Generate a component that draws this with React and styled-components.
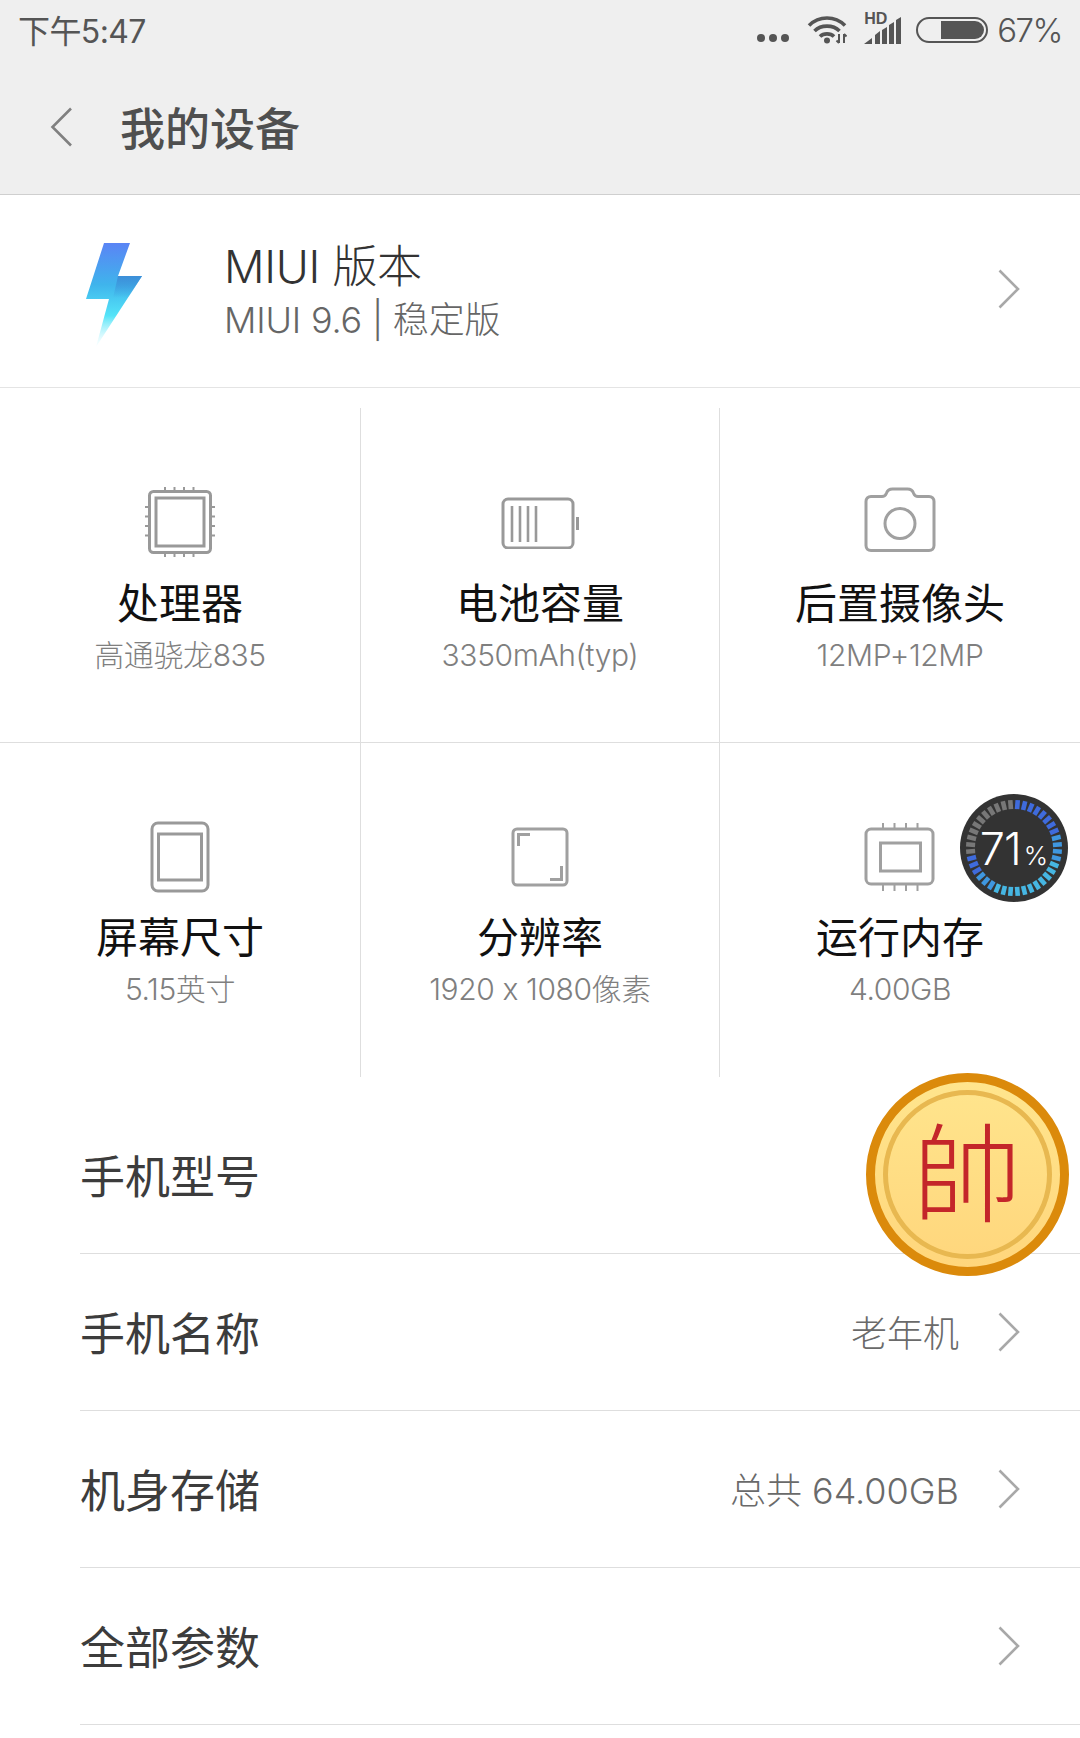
import React from 'react';
import styled, { createGlobalStyle } from 'styled-components';

const GlobalStyle = createGlobalStyle`
    html, body {
        margin: 0;
        padding: 0;
        background: #fff;
    }
    * {
        box-sizing: border-box;
    }
`

const FONT = `Inter, "Noto Sans CJK SC", sans-serif`;

const specs = [
    { key: 'cpu', title: '处理器', sub: '高通骁龙835' },
    { key: 'battery', title: '电池容量', sub: '3350mAh(typ)' },
    { key: 'camera', title: '后置摄像头', sub: '12MP+12MP' },
    { key: 'screen', title: '屏幕尺寸', sub: '5.15英寸' },
    { key: 'resolution', title: '分辨率', sub: '1920 x 1080像素' },
    { key: 'ram', title: '运行内存', sub: '4.00GB' },
];

const rows = [
    { title: '手机型号' },
    { title: '手机名称', value: '老年机', arrow: true },
    { title: '机身存储', value: '总共 64.00GB', arrow: true },
    { title: '全部参数', arrow: true },
];

const ticks = (x, y, len, step, n) =>
    Array.from({ length: n }, (_, i) => `M${x + i * step} ${y}v${len}`).join('');

const CpuIcon = () => (
    <svg width="72" height="72" viewBox="0 0 72 72" fill="none" stroke="#999">
        <rect x="5.500" y="5.500" width="61" height="61" rx="4" strokeWidth="3" />
        <rect x="12" y="12" width="48" height="48" strokeWidth="3" />
        <path strokeWidth="2" d={ticks(21, 1, 3, 9.500, 4)} />
        <path strokeWidth="2" d={ticks(21, 68, 3, 9.500, 4)} />
        <path strokeWidth="2" d="M1 21h3M1 30.500h3M1 40h3M1 49.500h3M68 21h3M68 30.500h3M68 40h3M68 49.500h3" />
    </svg>
);

const BatteryIcon = () => (
    <svg width="78" height="54" viewBox="0 -2 78 54" fill="none" stroke="#999">
        <rect x="2" y="2" width="70" height="49" rx="5" strokeWidth="3" />
        <path strokeWidth="2.600" d={ticks(11, 9, 36, 8, 4)} />
        <path strokeWidth="3" d="M76.500 20v13" />
    </svg>
);

const CameraIcon = () => (
    <svg width="72" height="70" viewBox="0 0 72 70" fill="none" stroke="#a0a0a0" strokeWidth="3">
        <path d="M7 9.500h11c3 0 3.500-1.200 4.500-3.500 1-2.600 3-4 6-4h15c3 0 5 1.400 6 4 1 2.300 1.500 3.500 4.500 3.500h11c3 0 5 2 5 5v44c0 3-2 5-5 5H7c-3 0-5-2-5-5v-44c0-3 2-5 5-5z" />
        <circle cx="36" cy="36.500" r="15" />
    </svg>
);

const ScreenIcon = () => (
    <svg width="60" height="72" viewBox="0 0 60 72" fill="none" stroke="#999">
        <rect x="2" y="2" width="56" height="68" rx="6" strokeWidth="3" />
        <rect x="8.500" y="13" width="43" height="46" strokeWidth="3" />
    </svg>
);

const ResolutionIcon = () => (
    <svg width="58" height="60" viewBox="0 0 58 60" fill="none" stroke="#a0a0a0">
        <rect x="2" y="2" width="54" height="56" rx="4" strokeWidth="3" />
        <path strokeWidth="3" d="M7.500 19V7.500H19M50.500 39v13.500H39" />
    </svg>
);

const RamIcon = () => (
    <svg width="72" height="68" viewBox="0 0 72 68" fill="none" stroke="#a0a0a0">
        <rect x="2" y="6" width="67" height="55" rx="5" strokeWidth="3" />
        <rect x="16.500" y="20" width="40" height="28" strokeWidth="3" />
        <path strokeWidth="2" d={ticks(19, 0, 5, 11.500, 4)} />
        <path strokeWidth="2" d={ticks(19, 62, 6, 11.500, 4)} />
    </svg>
);

const specIcons = {
    cpu: CpuIcon,
    battery: BatteryIcon,
    camera: CameraIcon,
    screen: ScreenIcon,
    resolution: ResolutionIcon,
    ram: RamIcon,
};

const Chevron = ({ left, color = '#a8a8a8' }) => (
    <svg width="22" height="40" viewBox="0 0 22 40" fill="none" stroke={color} strokeWidth="2.600">
        <path d={left ? 'M21 1.500 2.500 20 21 38.500' : 'M1.500 1.500 20 20 1.500 38.500'} />
    </svg>
);

const Bolt = () => (
    <svg width="58" height="104" viewBox="0 0 58 104">
        <defs>
            <linearGradient id="boltFill" x1="0" y1="0" x2="0" y2="1">
                <stop offset="0" stopColor="#5a84f5" />
                <stop offset="0.4" stopColor="#3fb4ec" />
                <stop offset="0.7" stopColor="#54e4f8" />
                <stop offset="1" stopColor="#e4fcff" stopOpacity="0.2" />
            </linearGradient>
            <linearGradient id="boltShade" x1="0" y1="0" x2="0" y2="1">
                <stop offset="0" stopColor="#3c8fd8" />
                <stop offset="1" stopColor="#3c8fd8" stopOpacity="0" />
            </linearGradient>
        </defs>
        <path fill="url(#boltFill)" d="M19 0H45L33 33H57L11 104 24 56H1z" />
        <path fill="url(#boltShade)" d="M33 33H57L43 55H28z" />
    </svg>
);

const Wifi = () => (
    <svg width="40" height="28" viewBox="0 0 40 28" fill="none" stroke="#555" strokeWidth="3.600">
        <path d="M2 9.500C12-.5 28-.5 38 9.500" />
        <path d="M7.500 15C14 8.500 26 8.500 32.500 15" />
        <path d="M13 20.500c3.500-3.500 10.500-3.500 14 0" />
        <circle cx="20" cy="24.500" r="3" fill="#555" stroke="none" />
        <path strokeWidth="2" d="M32 18v9M37 18v9M29.500 24.500l2.500 2.500M37 18l2.500 2.500" />
    </svg>
);

const Signal = () => (
    <svg width="37" height="30" viewBox="0 0 37 30" fill="#555">
        <path d="M0 29h8v-6zM11 29h5V16l-5 4zM18 29h5V12l-5 3zM25 29h5V7l-5 3zM32 29h5V2l-5 3z" />
    </svg>
);

const Dial = () => {
    const total = 40;
    return (
        <svg width="108" height="108" viewBox="0 0 108 108" fill="none" strokeWidth="4.600">
            {Array.from({ length: total }, (_, i) => {
                const deg = (i + 0.5) * (360 / total);
                const on = i < 29;
                const hue = i < 8 ? '#3f6bdc' : i < 12 ? '#3f97e0' : i < 23 ? '#46b6e2' : i < 26 ? '#3f97e0' : '#3f6bdc';
                return (
                    <path
                        key={deg}
                        d="M54 6v9"
                        stroke={on ? hue : '#777'}
                        transform={`rotate(${deg} 54 54)`}
                    />
                );
            })}
        </svg>
    );
};

const App = () => (
    <Page>
        <GlobalStyle />
        <Header>
            <StatusBar>
                <Clock>下午5:47</Clock>
                <StatusIcons>
                    <Dots><i /><i /><i /></Dots>
                    <Wifi />
                    <SignalBox>
                        <HdTag>HD</HdTag>
                        <Signal />
                    </SignalBox>
                    <BatteryShell><BatteryLevel /></BatteryShell>
                    <Percent>67%</Percent>
                </StatusIcons>
            </StatusBar>
            <NavBar>
                <Chevron left color="#808080" />
                <PageTitle>我的设备</PageTitle>
            </NavBar>
        </Header>

        <VersionRow>
            <BoltSlot><Bolt /></BoltSlot>
            <VersionText>
                <VersionTitle>MIUI 版本</VersionTitle>
                <VersionSub>MIUI 9.6 | 稳定版</VersionSub>
            </VersionText>
            <Chevron />
        </VersionRow>

        <SpecGrid>
            {specs.map((item, i) => {
                const Icon = specIcons[item.key];
                return (
                    <SpecCell key={item.key} $divider={i % 3 !== 2} $underline={i < 3}>
                        <IconSlot><Icon /></IconSlot>
                        <SpecTitle>{item.title}</SpecTitle>
                        <SpecSub>{item.sub}</SpecSub>
                    </SpecCell>
                );
            })}
        </SpecGrid>

        <List>
            {rows.map(row => (
                <ListRow key={row.title}>
                    <RowTitle>{row.title}</RowTitle>
                    {row.value && <RowValue>{row.value}</RowValue>}
                    {row.arrow && <ArrowSlot><Chevron /></ArrowSlot>}
                </ListRow>
            ))}
        </List>

        <MemoryBall>
            <Dial />
            <MemoryText>71<small>%</small></MemoryText>
        </MemoryBall>
        <Coin>
            <CoinRing>帥</CoinRing>
        </Coin>
    </Page>
)

const Page = styled.div`
    position: relative;
    width: 1080px;
    height: 1738px;
    overflow: hidden;
    background: #fff;
    font-family: ${FONT};
    font-feature-settings: "calt" 0;
`

const Header = styled.header`
    height: 195px;
    background: #efefef;
    border-bottom: 1px solid #cfcfcf;
`

const StatusBar = styled.div`
    height: 58px;
    padding: 0 18px;
    display: flex;
    align-items: center;
    justify-content: space-between;
    color: #555;
`

const Clock = styled.span`
    font-size: 32px;
    letter-spacing: -0.6px;
`

const StatusIcons = styled.div`
    display: flex;
    align-items: center;
    margin-top: 2px;
`

const Dots = styled.div`
    display: flex;
    gap: 4px;
    margin: 16px 18px 0 0;
    i {
        width: 8px;
        height: 8px;
        border-radius: 50%;
        background: #555;
    }
`

const SignalBox = styled.div`
    position: relative;
    width: 37px;
    height: 30px;
    margin: 0 15px 0 17px;
`

const HdTag = styled.span`
    position: absolute;
    left: 0;
    top: -5px;
    font-size: 16px;
    font-weight: 700;
    line-height: 18px;
    font-family: "Liberation Sans", sans-serif;
`

const BatteryShell = styled.div`
    width: 72px;
    height: 26px;
    padding: 2px 2px 2px 23px;
    border: 2px solid #555;
    border-radius: 13px;
`

const BatteryLevel = styled.div`
    height: 100%;
    background: #555;
    border-radius: 0 9px 9px 0;
`

const Percent = styled.span`
    margin-left: 9px;
    font-size: 33px;
    font-weight: 300;
    letter-spacing: -1.5px;
`

const NavBar = styled.div`
    height: 136px;
    padding: 1px 0 0 50px;
    display: flex;
    align-items: center;
    gap: 48px;
`

const PageTitle = styled.h1`
    margin: 0;
    font-size: 45px;
    font-weight: 500;
    color: #4f4f4f;
`

const VersionRow = styled.div`
    height: 193px;
    padding: 0 60px 4px 0;
    display: flex;
    align-items: center;
    border-bottom: 1px solid #e4e4e4;
`

const BoltSlot = styled.div`
    width: 224px;
    padding: 12px 0 0 85px;
    display: flex;
`

const VersionText = styled.div`
    flex: 1;
    padding-top: 4px;
    display: flex;
    flex-direction: column;
`

const VersionTitle = styled.div`
    font-size: 45px;
    font-weight: 300;
    line-height: 55px;
    color: #333;
    letter-spacing: -0.3px;
`

const VersionSub = styled.div`
    margin-top: 2px;
    font-size: 36px;
    font-weight: 300;
    line-height: 48px;
    color: #666;
    letter-spacing: -0.2px;
`

const SpecGrid = styled.section`
    margin-top: 20px;
    display: grid;
    grid-template-columns: 361px 359px 360px;
    grid-auto-rows: 334.5px;
`

const SpecCell = styled.div`
    padding-top: 74px;
    display: flex;
    flex-direction: column;
    align-items: center;
    border-right: ${props => (props.$divider ? '1px solid #dedede' : 'none')};
    border-bottom: ${props => (props.$underline ? '1px solid #dedede' : 'none')};
`

const IconSlot = styled.div`
    height: 80px;
    display: flex;
    align-items: center;
    justify-content: center;
`

const SpecTitle = styled.div`
    margin-top: 13.500px;
    font-size: 42px;
    line-height: 56px;
    color: #111;
`

const SpecSub = styled.div`
    margin-top: -1px;
    font-size: 30px;
    font-weight: 300;
    line-height: 48px;
    color: #7f7f7f;
    letter-spacing: -0.4px;
`

const List = styled.section`
    margin-top: 20px;
    margin-left: 80px;
`

const ListRow = styled.div`
    height: 157px;
    padding-right: 60px;
    display: flex;
    align-items: center;
    border-bottom: 1px solid #dedede;
`

const RowTitle = styled.div`
    flex: 1;
    margin-top: -2px;
    font-size: 45px;
    color: #3c3c3c;
`

const RowValue = styled.div`
    margin-top: -3px;
    font-size: 36px;
    font-weight: 300;
    color: #6a6a6a;
`

const ArrowSlot = styled.div`
    margin-left: 39px;
    display: flex;
`

const MemoryBall = styled.div`
    position: absolute;
    left: 960px;
    top: 794px;
    width: 108px;
    height: 108px;
    border-radius: 50%;
    background: #333;
    display: flex;
    align-items: center;
    justify-content: center;
    svg {
        position: absolute;
        inset: 0;
    }
`

const MemoryText = styled.div`
    position: relative;
    font-size: 45px;
    font-weight: 300;
    color: #fff;
    letter-spacing: -1px;
    small {
        margin-left: 3px;
        font-size: 26px;
        letter-spacing: 0;
    }
`

const Coin = styled.div`
    position: absolute;
    left: 866px;
    top: 1073px;
    width: 203px;
    height: 203px;
    padding: 8px;
    border-radius: 50%;
    background: linear-gradient(#ffe58d, #ffd67c);
    border: 9px solid #db8a0b;
`

const CoinRing = styled.div`
    width: 100%;
    height: 100%;
    padding-bottom: 16px;
    border-radius: 50%;
    border: 5px solid #e8b850;
    display: flex;
    align-items: center;
    justify-content: center;
    font-family: "Noto Sans CJK TC", sans-serif;
    font-size: 108px;
    font-weight: 300;
    line-height: 1;
    color: #c4262a;
`

export default App;
